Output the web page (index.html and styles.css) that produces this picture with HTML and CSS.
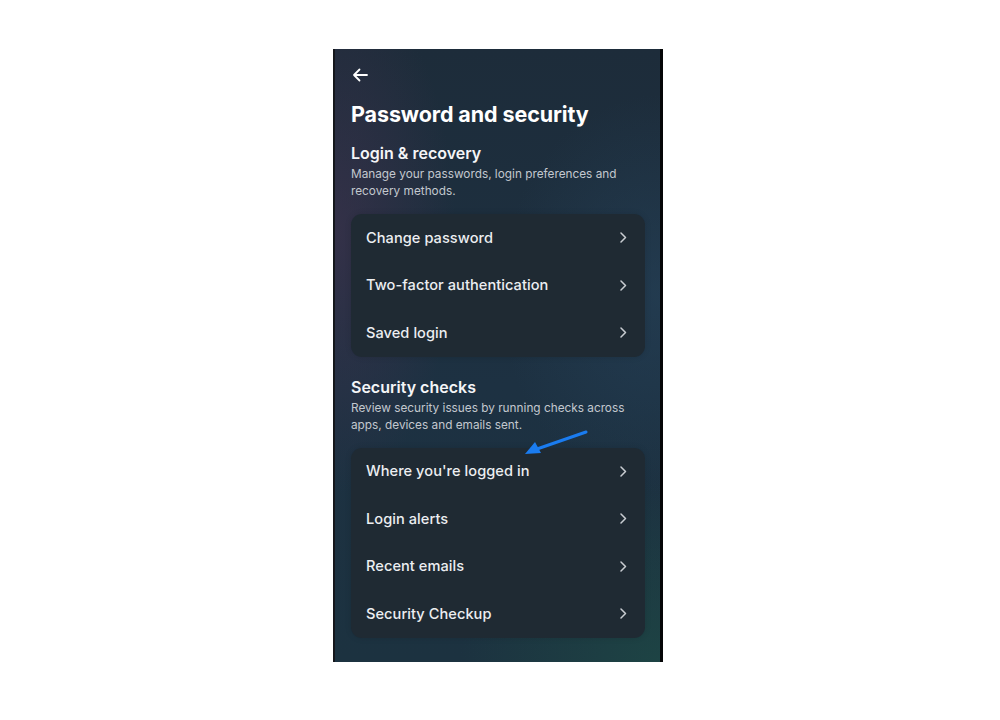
FILE: index.html
```html
<!DOCTYPE html>
<html lang="en">
<head>
<meta charset="utf-8">
<title>Password and security</title>
<link rel="stylesheet" href="styles.css">
</head>
<body>
<div class="page">
  <div class="phone">
    <div class="topbar">
      <svg class="back" width="16" height="14" viewBox="0 0 16 14" aria-hidden="true">
        <path d="M15 7H2M7.5 1.5L2 7l5.5 5.5" fill="none" stroke="#fff" stroke-width="1.8" stroke-linecap="round" stroke-linejoin="round"/>
      </svg>
    </div>
    <h1 class="title">Password and security</h1>

    <section class="section">
      <h2 class="sec-title">Login &amp; recovery</h2>
      <p class="sec-desc">Manage your passwords, login preferences and recovery methods.</p>
      <div class="card">
        <div class="row"><span>Change password</span><svg class="chev" width="7" height="11" viewBox="0 0 7 11"><path d="M1 1l4.5 4.5L1 10" fill="none" stroke="#c9cdd2" stroke-width="1.5" stroke-linecap="round" stroke-linejoin="round"/></svg></div>
        <div class="row"><span>Two-factor authentication</span><svg class="chev" width="7" height="11" viewBox="0 0 7 11"><path d="M1 1l4.5 4.5L1 10" fill="none" stroke="#c9cdd2" stroke-width="1.5" stroke-linecap="round" stroke-linejoin="round"/></svg></div>
        <div class="row"><span>Saved login</span><svg class="chev" width="7" height="11" viewBox="0 0 7 11"><path d="M1 1l4.5 4.5L1 10" fill="none" stroke="#c9cdd2" stroke-width="1.5" stroke-linecap="round" stroke-linejoin="round"/></svg></div>
      </div>
    </section>

    <section class="section second">
      <h2 class="sec-title">Security checks</h2>
      <p class="sec-desc">Review security issues by running checks across apps, devices and emails sent.</p>
      <div class="card">
        <div class="row"><span>Where you're logged in</span><svg class="chev" width="7" height="11" viewBox="0 0 7 11"><path d="M1 1l4.5 4.5L1 10" fill="none" stroke="#c9cdd2" stroke-width="1.5" stroke-linecap="round" stroke-linejoin="round"/></svg></div>
        <div class="row"><span>Login alerts</span><svg class="chev" width="7" height="11" viewBox="0 0 7 11"><path d="M1 1l4.5 4.5L1 10" fill="none" stroke="#c9cdd2" stroke-width="1.5" stroke-linecap="round" stroke-linejoin="round"/></svg></div>
        <div class="row"><span>Recent emails</span><svg class="chev" width="7" height="11" viewBox="0 0 7 11"><path d="M1 1l4.5 4.5L1 10" fill="none" stroke="#c9cdd2" stroke-width="1.5" stroke-linecap="round" stroke-linejoin="round"/></svg></div>
        <div class="row"><span>Security Checkup</span><svg class="chev" width="7" height="11" viewBox="0 0 7 11"><path d="M1 1l4.5 4.5L1 10" fill="none" stroke="#c9cdd2" stroke-width="1.5" stroke-linecap="round" stroke-linejoin="round"/></svg></div>
      </div>
      <svg class="pointer" width="66" height="28" viewBox="0 0 66 28" aria-hidden="true">
        <path d="M63 2L14 19" fill="none" stroke="#1a7cf0" stroke-width="3" stroke-linecap="round"/>
        <path d="M2 24L12 12L18 23Z" fill="#1a7cf0"/>
      </svg>
    </section>
  </div>
</div>
</body>
</html>
```

FILE: styles.css
```css
* { box-sizing: border-box; }
html, body { margin: 0; padding: 0; background: #ffffff; }
body { font-family: Inter, "Noto Sans", "DejaVu Sans", sans-serif; }

.page {
  padding: 49px 0 0 333px;
}

.phone {
  position: relative;
  width: 330px;
  height: 613px;
  overflow: hidden;
  border-left: 2px solid #15171c;
  border-right: 3px solid #050607;
  padding: 19px 15px 0 16px;
  background:
    radial-gradient(ellipse 120px 260px at 0% 30%, rgba(70, 50, 80, 0.55), rgba(70, 50, 80, 0) 100%),
    radial-gradient(ellipse 200px 180px at 100% 100%, rgba(30, 75, 70, 0.7), rgba(30, 75, 70, 0) 100%),
    radial-gradient(ellipse 160px 200px at 100% 40%, rgba(40, 70, 95, 0.5), rgba(40, 70, 95, 0) 100%),
    linear-gradient(180deg, #1d2c3a 0%, #1d3142 55%, #1c3240 100%);
  color: #fff;
}

.topbar {
  height: 20px;
  display: flex;
  align-items: center;
  margin-top: -3px;
}
.back { display: block; margin-left: 1px; }

.title {
  margin: 15px 0 0;
  font-size: 21.5px;
  line-height: 28px;
  font-weight: 700;
  letter-spacing: -0.1px;
  color: #ffffff;
}

.section { position: relative; margin-top: 15px; }
.section.second { margin-top: 20px; }

.sec-title {
  margin: 0;
  font-size: 16px;
  line-height: 20px;
  font-weight: 600;
  color: #f4f5f7;
}

.sec-desc {
  margin: 3px 0 0;
  font-size: 11.8px;
  line-height: 17px;
  color: #c3c8cf;
  padding-right: 10px;
}

.card {
  margin-top: 14px;
  background: #1f2a33;
  border-radius: 11px;
  display: flex;
  flex-direction: column;
  box-shadow: 0 0 6px rgba(0, 0, 0, 0.12);
}

.row {
  height: 47.5px;
  display: flex;
  align-items: center;
  justify-content: space-between;
  padding: 0 18px 0 15px;
  font-size: 14.6px;
  font-weight: 500;
  color: #eceef1;
}
.row span { letter-spacing: 0.05px; }
.chev { display: block; flex: none; }

.pointer {
  position: absolute;
  left: 172px;
  top: 53px;
}
```
